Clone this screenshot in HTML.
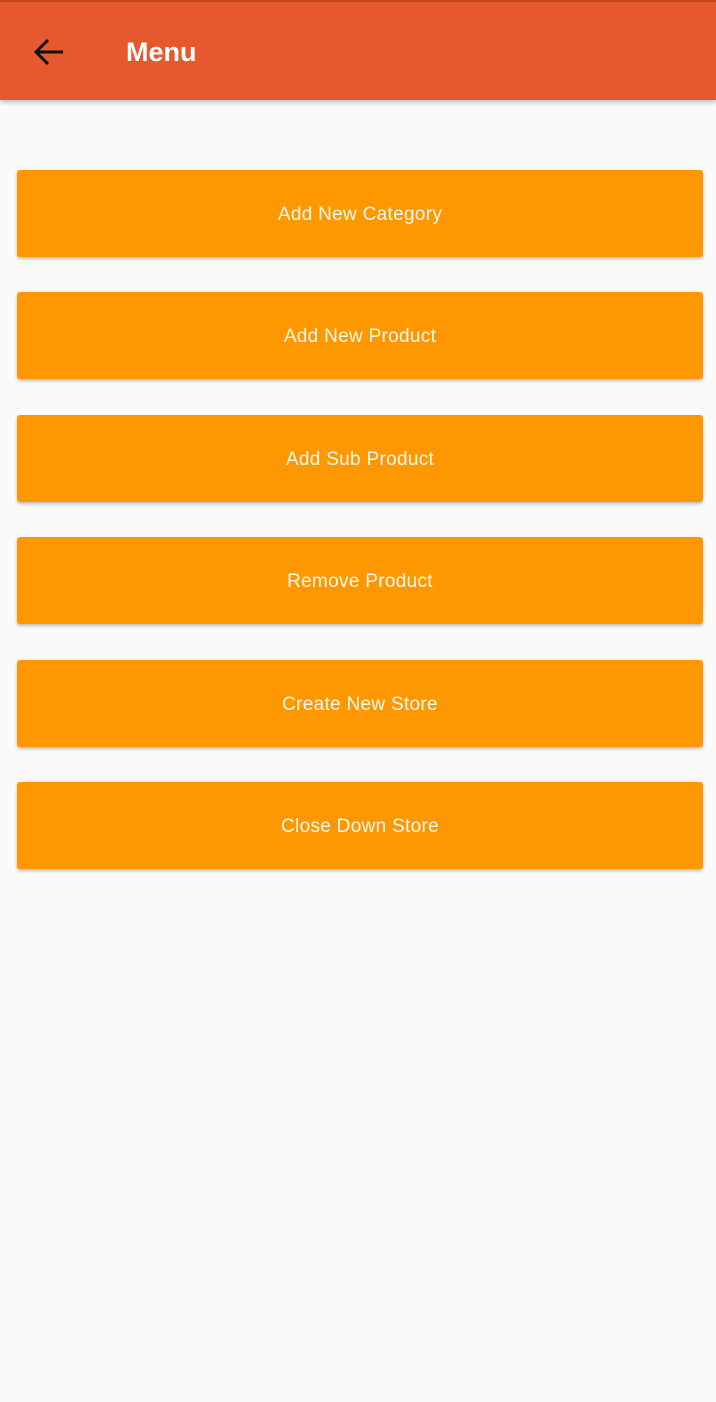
<!DOCTYPE html>
<html><head><style>
body{margin:0;width:716px;height:1402px;background:#fafafa;font-family:"Liberation Sans",sans-serif;overflow:hidden;position:relative}
.bar{position:absolute;left:0;top:0;width:716px;height:100px;background:#e6582d;border-top:2px solid #c4461f;box-sizing:border-box;box-shadow:0 2px 5px rgba(0,0,0,.28)}
.title{position:absolute;left:126px;top:35px;color:#fff;font-size:27px;font-weight:bold}
.btn{position:absolute;left:17px;width:686px;height:87px;background:#ff9800;border-radius:3px;box-shadow:0 2px 3px rgba(0,0,0,.25);color:#fff8ee;font-size:19px;letter-spacing:0.3px;display:flex;align-items:center;justify-content:center;padding-top:3px;box-sizing:border-box}
</style></head><body>
<div class="bar">
<svg style="position:absolute;left:33px;top:36px" width="32" height="30" viewBox="0 0 32 30"><path d="M3 14H30M15 2L3 14L15 26" fill="none" stroke="#111" stroke-width="3"/></svg>
<div class="title">Menu</div></div>
<div class="btn" style="top:170px">Add New Category</div>
<div class="btn" style="top:292px">Add New Product</div>
<div class="btn" style="top:415px">Add Sub Product</div>
<div class="btn" style="top:537px">Remove Product</div>
<div class="btn" style="top:660px">Create New Store</div>
<div class="btn" style="top:782px">Close Down Store</div>
</body></html>
